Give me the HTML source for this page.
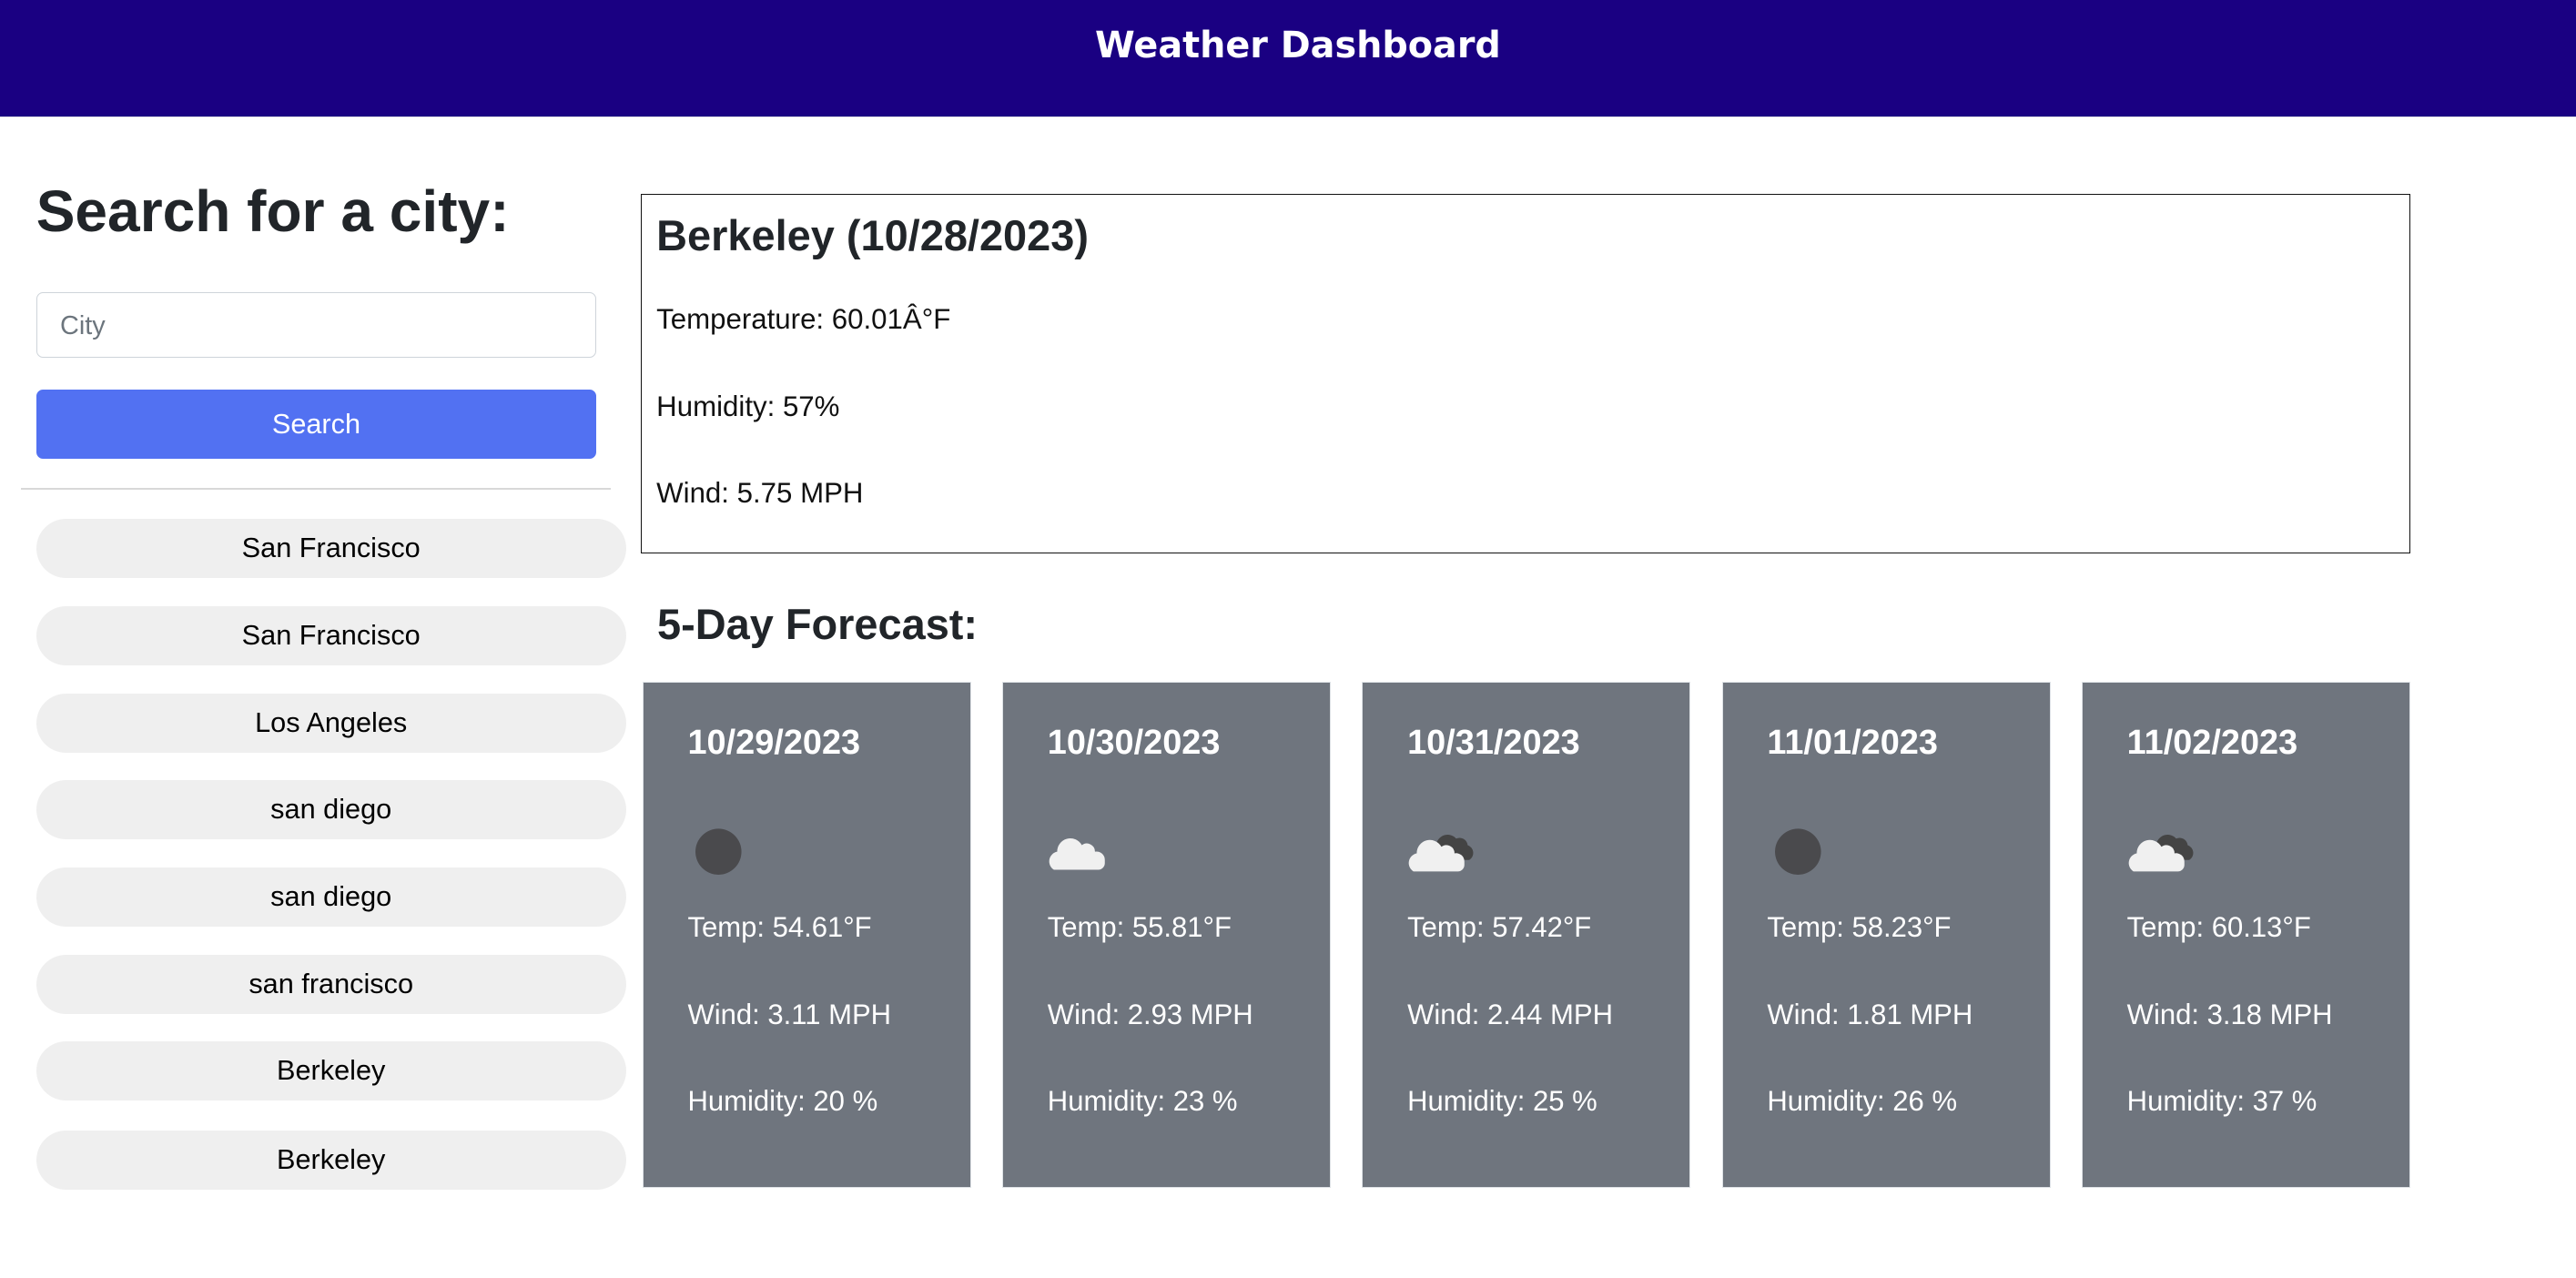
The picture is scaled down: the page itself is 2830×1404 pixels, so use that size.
<!DOCTYPE html>
<html><head><meta charset="utf-8"><style>
html{zoom:1.805}
body{margin:0;width:1568px;height:778px;overflow:hidden;background:#fff;font-family:"Liberation Sans",Arial,sans-serif;color:#212529;position:relative}
.hdr{position:absolute;left:0;top:0;width:1568px;height:71px;background:#1a0082;border-bottom:1px solid #dee2e6;text-align:center}
.hdr span{display:inline-block;margin-top:15px;color:#fff;font-family:"DejaVu Sans",sans-serif;font-weight:bold;font-size:22px;margin-left:12px}
.a{position:absolute}
h2{margin:0;font-weight:bold}
.inp{left:22px;top:178px;height:40px;border:1px solid #ced4da;border-radius:4px;box-sizing:border-box;width:341px;font-size:16px;color:#6c757d;line-height:40px;padding-left:14px}
.btn{left:22px;top:237px;width:341px;height:42px;background:#5271f2;border-radius:4px;color:#fff;font-size:17px;text-align:center;line-height:42px}
.hr{left:13px;top:297px;width:359px;height:1px;background:#d8d8d8}
.h{left:22px;width:359px;height:36px;border-radius:18px;background:#efefef;color:#000;font-size:17px;text-align:center;line-height:36px}
.box{left:390px;top:118px;width:1077px;height:219px;border:1px solid #111;box-sizing:border-box}
.box p{position:absolute;left:9px;margin:0;font-size:17.3px;color:#111}
.card{top:415px;width:200px;height:308px;background:#6f757e;border:1px solid #dee2e6;box-sizing:border-box;color:#fff}
.card b{position:absolute;left:27px;top:25px;font-size:21px}
.card p{position:absolute;left:27px;margin:0;font-size:17.2px}
</style></head><body>
<div class="hdr"><span>Weather Dashboard</span></div>
<h2 class="a" style="left:22px;top:108px;font-size:35.5px">Search for a city:</h2>
<div class="a inp">City</div>
<div class="a btn">Search</div>
<div class="a hr"></div>
<div class="a h" style="top:316px">San Francisco</div>
<div class="a h" style="top:369px">San Francisco</div>
<div class="a h" style="top:422px">Los Angeles</div>
<div class="a h" style="top:475px">san diego</div>
<div class="a h" style="top:528px">san diego</div>
<div class="a h" style="top:581px">san francisco</div>
<div class="a h" style="top:634px">Berkeley</div>
<div class="a h" style="top:688px">Berkeley</div>
<div class="a box">
<h2 class="a" style="left:9px;top:10px;font-size:26px">Berkeley (10/28/2023)</h2>
<p style="top:66px">Temperature: 60.01Â°F</p>
<p style="top:119px">Humidity: 57%</p>
<p style="top:172px">Wind: 5.75 MPH</p>
</div>
<h2 class="a" style="left:400px;top:365px;font-size:26px">5-Day Forecast:</h2>

<div class="a card" style="left:391px"><b>10/29/2023</b>
<svg class="a" style="left:27px;top:86px" width="36" height="36" viewBox="0 0 36 36"><circle cx="19" cy="17" r="14" fill="#4a4a4d"/></svg>
<p style="top:139px">Temp: 54.61°F</p><p style="top:192px">Wind: 3.11 MPH</p><p style="top:245px">Humidity: 20 %</p></div>

<div class="a card" style="left:610px"><b>10/30/2023</b>
<svg class="a" style="left:25px;top:86px" width="40" height="36" viewBox="0 0 40 36"><path d="M6 28a6 6 0 0 1 2-11a8 8 0 0 1 15-4a5 5 0 0 1 8 4a5 5 0 0 1 6 5v2a4 4 0 0 1-4 4z" fill="#f0f0f0"/></svg>
<p style="top:139px">Temp: 55.81°F</p><p style="top:192px">Wind: 2.93 MPH</p><p style="top:245px">Humidity: 23 %</p></div>

<div class="a card" style="left:829px"><b>10/31/2023</b>
<svg class="a" style="left:25px;top:86px" width="44" height="36" viewBox="0 0 44 36"><path d="M20 12a7 7 0 0 1 12-3a5 5 0 0 1 7 4a5 5 0 0 1 1 9h-14z" fill="#444"/><path d="M6 29a6 6 0 0 1 2-11a8 8 0 0 1 15-4a5 5 0 0 1 8 4a5 5 0 0 1 6 5v2a4 4 0 0 1-4 4z" fill="#f0f0f0"/></svg>
<p style="top:139px">Temp: 57.42°F</p><p style="top:192px">Wind: 2.44 MPH</p><p style="top:245px">Humidity: 25 %</p></div>

<div class="a card" style="left:1048px"><b>11/01/2023</b>
<svg class="a" style="left:27px;top:86px" width="36" height="36" viewBox="0 0 36 36"><circle cx="19" cy="17" r="14" fill="#4a4a4d"/></svg>
<p style="top:139px">Temp: 58.23°F</p><p style="top:192px">Wind: 1.81 MPH</p><p style="top:245px">Humidity: 26 %</p></div>

<div class="a card" style="left:1267px"><b>11/02/2023</b>
<svg class="a" style="left:25px;top:86px" width="44" height="36" viewBox="0 0 44 36"><path d="M20 12a7 7 0 0 1 12-3a5 5 0 0 1 7 4a5 5 0 0 1 1 9h-14z" fill="#444"/><path d="M6 29a6 6 0 0 1 2-11a8 8 0 0 1 15-4a5 5 0 0 1 8 4a5 5 0 0 1 6 5v2a4 4 0 0 1-4 4z" fill="#f0f0f0"/></svg>
<p style="top:139px">Temp: 60.13°F</p><p style="top:192px">Wind: 3.18 MPH</p><p style="top:245px">Humidity: 37 %</p></div>
</body></html>
